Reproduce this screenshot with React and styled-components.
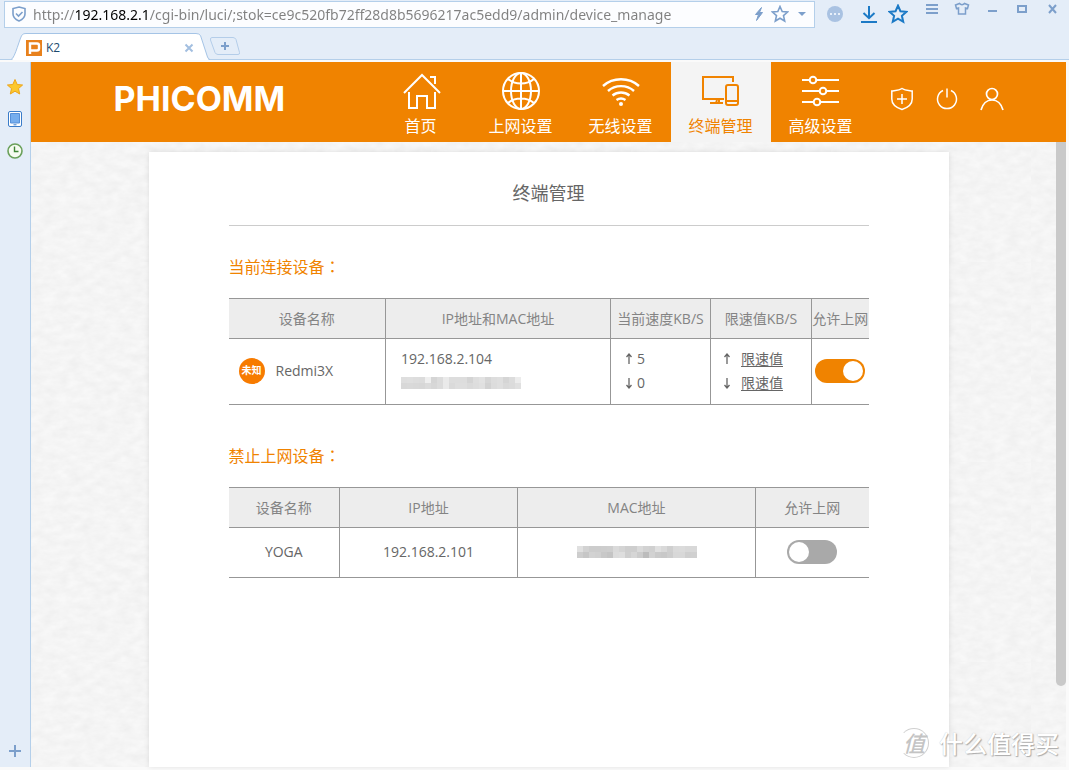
import React, { useState } from 'react';
import styled, { createGlobalStyle, ThemeProvider } from 'styled-components';

const theme = {
  color: {
    orange: '#f08300',
    chrome: '#e4edf8',
    chromeLine: '#b4cfea',
    chromeIcon: '#7c9fcb',
    blue: '#1c7ac6',
    paper: '#f4f4f4',
    line: '#979797',
    head: '#ededed',
    gray: '#666',
    lightGray: '#848484',
  },
};

//* subtle paper grain behind the card
const grain = encodeURIComponent(
  `<svg xmlns='http://www.w3.org/2000/svg' width='200' height='200'><filter id='n'><feTurbulence type='fractalNoise' baseFrequency='.08 .14' numOctaves='3' stitchTiles='stitch'/><feColorMatrix values='0 0 0 0 0  0 0 0 0 0  0 0 0 0 0  .05 0 0 0 -.01'/></filter><rect width='200' height='200' filter='url(#n)'/></svg>`,
).replace(/'/g, '%27').replace(/\(/g, '%28').replace(/\)/g, '%29');

const GlobalStyle = createGlobalStyle`
  * {
    box-sizing: border-box;
  }

  body {
    margin: 0;
    font-family: 'Open Sans', 'Noto Sans CJK SC', sans-serif;
    font-size: 14px;
    color: #666;
  }

  button {
    padding: 0;
    border: none;
    background: none;
    font: inherit;
    color: inherit;
    cursor: pointer;
  }

  svg {
    display: block;
  }
`;

const Window = styled.div`
  display: flex;
  flex-direction: column;
  height: 100vh;
  min-height: 640px;
  background: ${({ theme }) => theme.color.chrome};
`;

const TopBar = styled.div`
  display: flex;
  align-items: center;
  height: 28px;
  padding-left: 4px;
`;

const AddressBar = styled.div`
  display: flex;
  align-items: center;
  flex: 1;
  height: 27px;
  padding: 0 6px;
  border: 1px solid ${({ theme }) => theme.color.chromeLine};
  background: #fcfdff;
  color: ${({ theme }) => theme.color.chromeIcon};
`;

const UrlInput = styled.input`
  flex: 1;
  min-width: 0;
  height: 25px;
  margin-left: 6px;
  padding: 0;
  border: none;
  outline: none;
  font-family: 'Noto Sans', sans-serif;
  font-size: 14px;
  color: transparent;
  background: linear-gradient(to right, #808080 43px, #000 43px, #000 116px, #808080 116px);
  -webkit-background-clip: text;
  background-clip: text;
`;

const BarButtons = styled.div`
  display: flex;
  align-items: center;
  gap: ${({ gap }) => gap};
`;

const MoreButton = styled.button`
  margin: 0 16px 0 11px;
`;

const ToolButtons = styled(BarButtons)`
  padding-right: 16px;
  color: ${({ theme }) => theme.color.blue};
`;

const WindowButtons = styled(BarButtons)`
  align-self: flex-start;
  padding: 1px 9px 0 0;
  color: ${({ theme }) => theme.color.chromeIcon};
`;

const TabBar = styled.div`
  display: flex;
  align-items: flex-end;
  height: 32px;
  padding-left: 11px;
  border-bottom: 1px solid ${({ theme }) => theme.color.chromeLine};
`;

const Tab = styled.div`
  display: grid;
  margin-bottom: -1px;

  & > * {
    grid-area: 1 / 1;
  }
`;

const TabLabel = styled.div`
  display: flex;
  align-items: center;
  padding: 2px 16px 0 15px;
  font-size: 12px;
  color: #1d4a70;
  z-index: 1;

  & span {
    flex: 1;
    margin-left: 4px;
  }

  & button {
    color: #a3bfe0;
  }
`;

const NewTab = styled.button`
  margin-bottom: 3px;
`;

const Main = styled.div`
  display: flex;
  flex: 1;
  min-height: 0;
  padding: 2px 3px 3px 0;
  background: #fafafa;
`;

const SideBar = styled.div`
  display: flex;
  flex-direction: column;
  align-items: center;
  gap: 14px;
  width: 31px;
  padding: 16px 0 7px;
  border-right: 1px solid ${({ theme }) => theme.color.chromeLine};
  background: ${({ theme }) => theme.color.chrome};
`;

const AddButton = styled.button`
  margin-top: auto;
`;

const Page = styled.div`
  display: flex;
  flex-direction: column;
  flex: 1;
  min-width: 0;
  position: relative;
  background: #f8f8f8 url('data:image/svg+xml,${grain}');
`;

const Header = styled.header`
  background: ${({ theme }) => theme.color.orange};
  color: #fff;
`;

const HeaderInner = styled.div`
  display: flex;
  max-width: 1000px;
  height: 80px;
  margin: 0 auto;
`;

const Logo = styled.div`
  width: 322px;
  padding-left: 65px;
  font-family: Inter, 'Liberation Sans', sans-serif;
  font-size: 34px;
  font-weight: 700;
  line-height: 74px;
`;

const Nav = styled.nav`
  display: flex;
`;

const NavItem = styled.a`
  display: flex;
  flex-direction: column;
  align-items: center;
  gap: 3px;
  width: 100px;
  padding-top: 9px;
  font-size: 16px;
  line-height: 24px;
  text-decoration: none;
  color: ${({ active, theme }) => (active ? theme.color.orange : '#fff')};
  background: ${({ active, theme }) => (active ? theme.color.paper : 'transparent')};
`;

const UserMenu = styled.div`
  display: flex;
  align-items: center;
  gap: 21px;
  padding: 0 0 6px 19px;
`;

const Scroller = styled.div`
  display: flex;
  flex: 1;
  min-height: 0;
  padding-left: 10px;
`;

const Paper = styled.main`
  flex: 1;
  max-width: 800px;
  margin: 10px auto 0;
  padding: 0 80px;
  background: #fff;
  box-shadow: 0 0 5px rgba(0, 0, 0, 0.1);
`;

const ScrollBar = styled.div`
  width: 10px;
`;

const ScrollThumb = styled.div`
  height: 87%;
  border-radius: 0 0 5px 5px;
  background: #c9c9c9;
`;

const Title = styled.h1`
  margin: 0;
  padding: 25px 0 16px;
  border-bottom: 1px solid #ccc;
  font-size: 18px;
  font-weight: 400;
  line-height: 32px;
  text-align: center;
`;

const SectionTitle = styled.h2`
  margin: 28px 0 19px;
  font-size: 16px;
  font-weight: 400;
  line-height: 24px;
  color: ${({ theme }) => theme.color.orange};

  & span {
    font-family: 'Noto Sans CJK TC', sans-serif;
  }
`;

const Table = styled.table`
  width: 100%;
  margin-bottom: 38px;
  border-collapse: collapse;
  table-layout: fixed;
  line-height: 24px;

  & th,
  & td {
    padding: 0;
    border: 1px solid ${({ theme }) => theme.color.line};
    white-space: nowrap;
  }

  & th:first-child,
  & td:first-child {
    border-left: none;
  }

  & th:last-child,
  & td:last-child {
    border-right: none;
  }

  & th {
    height: 40px;
    font-weight: 400;
    color: ${({ theme }) => theme.color.lightGray};
    background: ${({ theme }) => theme.color.head};
  }

  & td {
    height: ${({ rowHeight }) => rowHeight};
    padding-bottom: 1px;
    text-align: center;
  }
`;

const Device = styled.div`
  display: flex;
  align-items: center;
  gap: 11px;
  padding-left: 10px;
`;

const Badge = styled.span`
  width: 26px;
  height: 26px;
  border-radius: 50%;
  font-size: 10px;
  font-weight: 700;
  line-height: 25px;
  text-align: center;
  color: #fff;
  background: #f77b00;
`;

const CellStack = styled.div`
  padding-left: ${({ indent }) => indent};
  text-align: left;
`;

const SpeedRow = styled.div`
  display: flex;
  align-items: center;
  gap: ${({ gap }) => gap};
`;

const LimitLink = styled.a`
  color: ${({ theme }) => theme.color.gray};
  text-underline-offset: 2px;
`;

const Toggle = styled.input.attrs({ type: 'checkbox' })`
  appearance: none;
  display: block;
  width: 50px;
  height: 24px;
  margin: 0 auto;
  padding: 2px;
  border-radius: 12px;
  background: #a9a9a9;
  cursor: pointer;

  &::before {
    content: '';
    display: block;
    width: 20px;
    height: 20px;
    border-radius: 50%;
    background: #fff;
  }

  &:checked {
    background: ${({ theme }) => theme.color.orange};
  }

  &:checked::before {
    margin-left: auto;
  }
`;

const MosaicGrid = styled.div`
  display: grid;
  grid-template-columns: repeat(20, 6px);
  grid-auto-rows: 6px;
  width: 120px;
  margin: ${({ center }) => (center ? '0 auto' : '6px 0')};
`;

const MosaicCell = styled.span`
  background: ${({ shade }) => shade};
`;

const Watermark = styled.div`
  display: flex;
  align-items: center;
  gap: 10px;
  position: absolute;
  right: 7px;
  bottom: 7px;
  font-family: 'Noto Sans CJK SC', sans-serif;
  font-size: 24px;
  font-weight: 500;
  line-height: 34px;
  color: #fff;
  text-shadow: 1px 1px 1px #aaa, 0 0 1px #bbb;
`;

const WatermarkSeal = styled.span`
  width: 30px;
  height: 30px;
  border: 1px solid #d0d0d0;
  border-left-color: transparent;
  border-radius: 50%;
  font-size: 22px;
  font-style: italic;
  line-height: 26px;
  text-align: center;
  color: #c4c4c4;
  text-shadow: none;
`;

const Line = ({ size = 40, width = size, box, stroke = 2, children }) => (
  <svg
    width={width}
    height={size}
    viewBox={box || `0 0 ${width} ${size}`}
    fill='none'
    stroke='currentColor'
    strokeWidth={stroke}
    aria-hidden='true'
  >
    {children}
  </svg>
);

const STAR = 'M9 1.5l2.2 5 5.4.5-4.1 3.6 1.2 5.4L9 13.2 4.3 16l1.2-5.4L1.4 7l5.4-.5z';

const HomeIcon = () => (
  <Line>
    <path d='M3 22L21 4l18 18M29 6h5v7M8 21v16h8V25h10v12h8V21' />
  </Line>
);

const GlobeIcon = () => (
  <Line>
    <circle cx='20' cy='20' r='18' />
    <ellipse cx='20' cy='20' rx='10' ry='18' />
    <path d='M20 2v36M2 20h36M7 8c7 6 19 6 26 0M7 32c7-6 19-6 26 0' />
  </Line>
);

const WifiIcon = () => (
  <Line stroke={2.4}>
    <path d='M2 15c10-9 26-9 36 0M7 20c7-6.500 19-6.500 26 0M11.500 24.500c5-4 12-4 17 0M15.500 29c3-2 6-2 9 0' />
    <circle cx='20' cy='33' r='2' fill='currentColor' stroke='none' />
  </Line>
);

const DevicesIcon = () => (
  <Line>
    <path d='M32 11V6H2v22h21M9 32h13M18 28v4M15 32l1-3' />
    <rect x='25' y='14' width='12' height='20' rx='2' />
    <path d='M25 30h12' />
  </Line>
);

const SlidersIcon = () => (
  <Line>
    <path d='M1 9h7M16 9h22M1 20h17M26 20h12M1 31h11M20 31h18' />
    <circle cx='12' cy='9' r='3.300' />
    <circle cx='22' cy='20' r='3.300' />
    <circle cx='16' cy='31' r='3.300' />
  </Line>
);

const navItems = [
  { label: '首页', Icon: HomeIcon },
  { label: '上网设置', Icon: GlobeIcon },
  { label: '无线设置', Icon: WifiIcon },
  { label: '终端管理', Icon: DevicesIcon, active: true },
  { label: '高级设置', Icon: SlidersIcon },
];

//* two rows of 20 gray blocks per masked address
const shades = {
  phone: 'dedfdddcefd5dceaddddddd4dee2d6dddfd5dcecd8d9d8d7dbd7dceadadededadde0d2dcdfd9dbe0',
  laptop: 'e0d2cccccdcedad4cecedad2d0e0d9cfdadbd8d8cdc6d2d0c8c4dcdecfd6ccbcd2cac8cdd8d8cfd0',
};

const Mosaic = ({ name, center }) => (
  <MosaicGrid center={center ? 1 : undefined}>
    {shades[name].match(/../g).map((v, i) => (
      <MosaicCell key={i} shade={`#${v}${v}${v}`} />
    ))}
  </MosaicGrid>
);

const BrowserBar = () => {
  const [url, setUrl] = useState(
    'http://192.168.2.1/cgi-bin/luci/;stok=ce9c520fb72ff28d8b5696217ac5edd9/admin/device_manage',
  );

  return (
    <TopBar>
      <AddressBar>
        <Line size={16} stroke={1.6}>
          <path d='M8 1l6 1.500v5.500c0 3.500-2.500 5.500-6 7-3.500-1.500-6-3.500-6-7V2.500z' />
          <path d='M5 7.500l2.500 2.500L11.500 6' />
        </Line>
        <UrlInput aria-label='URL' value={url} onChange={(e) => setUrl(e.target.value)} />
        <BarButtons gap='7px'>
          <button aria-label='加速'>
            <Line size={16} width={10} stroke={1}>
              <path d='M7.500 1.500L1.500 8.500h3L2.500 14.500 8.500 6.500h-3z' fill='currentColor' />
            </Line>
          </button>
          <button aria-label='收藏'>
            <Line size={18} stroke={1.6}>
              <path d={STAR} />
            </Line>
          </button>
          <button aria-label='展开'>
            <Line size={12}>
              <path d='M2 4h8L6 8z' fill='currentColor' stroke='none' />
            </Line>
          </button>
        </BarButtons>
      </AddressBar>
      <MoreButton aria-label='更多'>
        <Line size={18}>
          <circle cx='9' cy='9' r='8' fill='#a9c2e2' stroke='none' />
          <path d='M4 9h2M8 9h2M12 9h2' stroke='#e8f0fa' />
        </Line>
      </MoreButton>
      <ToolButtons gap='10px'>
        <button aria-label='下载'>
          <Line size={18}>
            <path d='M9 1v12M3.500 8L9 13.200 14.500 8M1 17h16' />
          </Line>
        </button>
        <button aria-label='收藏夹'>
          <Line size={20} box='0 0 18 18' stroke={1.8}>
            <path d={STAR} />
          </Line>
        </button>
      </ToolButtons>
      <WindowButtons gap='14px'>
        <button aria-label='菜单'>
          <Line size={16}>
            <path d='M2 4h12M2 8h12M2 12h12' />
          </Line>
        </button>
        <button aria-label='皮肤'>
          <Line size={16} stroke={1.5}>
            <path d='M5.500 2.500c1 1.500 4 1.500 5 0l4 1.500-1 3.500-2-.5v6h-7V7l-2 .5-1-3.500z' />
          </Line>
        </button>
        <button aria-label='最小化'>
          <Line size={16}>
            <path d='M4 10h9' />
          </Line>
        </button>
        <button aria-label='最大化'>
          <Line size={16}>
            <path d='M4 5h8v6H4z' />
          </Line>
        </button>
        <button aria-label='关闭'>
          <Line size={16}>
            <path d='M5 4l7 8M12 4l-7 8' />
          </Line>
        </button>
      </WindowButtons>
    </TopBar>
  );
};

const Tabs = () => (
  <TabBar>
    <Tab>
      <svg width='199' height='27' viewBox='0 0 199 27' aria-hidden='true'>
        <path d='M0 26.500C4 26 9 3 11.500 1.500Q12.500.5 15 .5H185Q188 .5 189.500 2.500L196.500 24Q197.500 26.500 199 26.500' fill='#fff' stroke='#a5c4e6' />
        <path d='M2 26.500h195' stroke='#fff' />
      </svg>
      <TabLabel>
        <svg width='16' height='16' viewBox='0 0 16 16' aria-hidden='true'>
          <path d='M0 0h16v16H0z' fill='#e8811c' />
          <path d='M4 14V3.500h7q2 0 2 2v3q0 2-2 2H4' fill='none' stroke='#fff' strokeWidth='2.400' />
        </svg>
        <span>K2</span>
        <button aria-label='关闭标签'>
          <Line size={10}>
            <path d='M1.500 1.500l7 7M8.500 1.500l-7 7' />
          </Line>
        </button>
      </TabLabel>
    </Tab>
    <NewTab aria-label='新建标签'>
      <svg width='30' height='19' viewBox='0 0 30 19' aria-hidden='true'>
        <path d='M2 .5h21q2 0 3 2l3.500 13q.5 2-1.500 2H8q-2 0-3-2L.5 3Q0 .5 2 .5z' fill='#e4edf8' stroke='#b4cde9' />
        <path d='M15 5v8M11 9h8' stroke='#7c9fcb' strokeWidth='2' />
      </svg>
    </NewTab>
  </TabBar>
);

const BrowserSide = () => (
  <SideBar>
    <button aria-label='收藏'>
      <svg width='18' height='18' viewBox='0 0 18 18' aria-hidden='true'>
        <path d={STAR} fill='#fcc82e' stroke='#eda51b' />
      </svg>
    </button>
    <button aria-label='手机'>
      <svg width='16' height='18' viewBox='0 0 16 18' aria-hidden='true'>
        <rect x='1.500' y='1.500' width='13' height='15' rx='1.500' fill='#fff' stroke='#3a7cc9' />
        <path d='M3.500 3.500h9v9.500h-9z' fill='#76aeee' stroke='#5690d8' />
        <path d='M6.500 14.800h3' stroke='#3a7cc9' />
      </svg>
    </button>
    <button aria-label='历史'>
      <svg width='18' height='18' viewBox='0 0 18 18' aria-hidden='true'>
        <circle cx='9' cy='9' r='7' fill='#f6fbf1' stroke='#6aa05a' strokeWidth='1.600' />
        <path d='M8.500 4.500v5h4' fill='none' stroke='#3f8534' strokeWidth='1.400' />
      </svg>
    </button>
    <AddButton aria-label='添加'>
      <svg width='18' height='18' viewBox='0 0 18 18' aria-hidden='true'>
        <path d='M9 3v12M3 9h12' stroke='#7c9fcb' strokeWidth='2' />
      </svg>
    </AddButton>
  </SideBar>
);

const PageHeader = () => (
  <Header>
    <HeaderInner>
      <Logo>PHICOMM</Logo>
      <Nav>
        {navItems.map(({ label, Icon, active }) => (
          <NavItem key={label} href='#' active={active ? 1 : undefined}>
            <Icon />
            {label}
          </NavItem>
        ))}
      </Nav>
      <UserMenu>
        <button aria-label='安全'>
          <Line size={24} stroke={1.5}>
            <path d='M12 1.500C9 3.500 5 3.500 1.800 4v8c0 5 4 8.500 10.200 10.500C18.200 20.500 22.200 17 22.200 12V4C19 3.500 15 3.500 12 1.500zM12 7v10M7 12h10' />
          </Line>
        </button>
        <button aria-label='重启'>
          <Line size={24} stroke={1.5}>
            <path d='M8 3.500a9.500 9.500 0 1 0 8 0M12 1.500v9' />
          </Line>
        </button>
        <button aria-label='用户'>
          <Line size={24} stroke={1.7}>
            <circle cx='12' cy='7' r='5.500' />
            <path d='M1 23c2-7 6-10 11-10s9 3 11 10' />
          </Line>
        </button>
      </UserMenu>
    </HeaderInner>
  </Header>
);

const Arrow = ({ down }) => (
  <Line size={12} width={8} stroke={1.3}>
    <path d={down ? 'M4 1v10M1.500 8L4 11l2.500-3' : 'M4 11V1M1.500 4L4 1l2.500 3'} />
  </Line>
);

const OnlineDevices = () => (
  <Table rowHeight='66px'>
    <colgroup>
      <col width='157' />
      <col width='225' />
      <col width='100' />
      <col width='101' />
      <col width='57' />
    </colgroup>
    <thead>
      <tr>
        <th>设备名称</th>
        <th>IP地址和MAC地址</th>
        <th>当前速度KB/S</th>
        <th>限速值KB/S</th>
        <th>允许上网</th>
      </tr>
    </thead>
    <tbody>
      <tr>
        <td>
          <Device>
            <Badge>未知</Badge>
            Redmi3X
          </Device>
        </td>
        <td>
          <CellStack indent='15px'>
            192.168.2.104
            <Mosaic name='phone' />
          </CellStack>
        </td>
        <td>
          <CellStack indent='14px'>
            <SpeedRow gap='4px'>
              <Arrow />5
            </SpeedRow>
            <SpeedRow gap='4px'>
              <Arrow down />0
            </SpeedRow>
          </CellStack>
        </td>
        <td>
          <CellStack indent='12px'>
            <SpeedRow gap='10px'>
              <Arrow />
              <LimitLink href='#'>限速值</LimitLink>
            </SpeedRow>
            <SpeedRow gap='10px'>
              <Arrow down />
              <LimitLink href='#'>限速值</LimitLink>
            </SpeedRow>
          </CellStack>
        </td>
        <td>
          <Toggle defaultChecked aria-label='Redmi3X 允许上网' />
        </td>
      </tr>
    </tbody>
  </Table>
);

const BlockedDevices = () => (
  <Table rowHeight='50px'>
    <colgroup>
      <col width='111' />
      <col width='178' />
      <col width='238' />
      <col width='113' />
    </colgroup>
    <thead>
      <tr>
        <th>设备名称</th>
        <th>IP地址</th>
        <th>MAC地址</th>
        <th>允许上网</th>
      </tr>
    </thead>
    <tbody>
      <tr>
        <td>YOGA</td>
        <td>192.168.2.101</td>
        <td>
          <Mosaic name='laptop' center />
        </td>
        <td>
          <Toggle aria-label='YOGA 允许上网' />
        </td>
      </tr>
    </tbody>
  </Table>
);

export default function App() {
  return (
    <ThemeProvider theme={theme}>
      <GlobalStyle />
      <Window>
        <BrowserBar />
        <Tabs />
        <Main>
          <BrowserSide />
          <Page>
            <PageHeader />
            <Scroller>
              <Paper>
                <Title>终端管理</Title>
                <SectionTitle>
                  当前连接设备<span lang='zh-TW'>：</span>
                </SectionTitle>
                <OnlineDevices />
                <SectionTitle>
                  禁止上网设备<span lang='zh-TW'>：</span>
                </SectionTitle>
                <BlockedDevices />
              </Paper>
              <ScrollBar>
                <ScrollThumb />
              </ScrollBar>
            </Scroller>
            <Watermark>
              <WatermarkSeal>值</WatermarkSeal>
              什么值得买
            </Watermark>
          </Page>
        </Main>
      </Window>
    </ThemeProvider>
  );
}
